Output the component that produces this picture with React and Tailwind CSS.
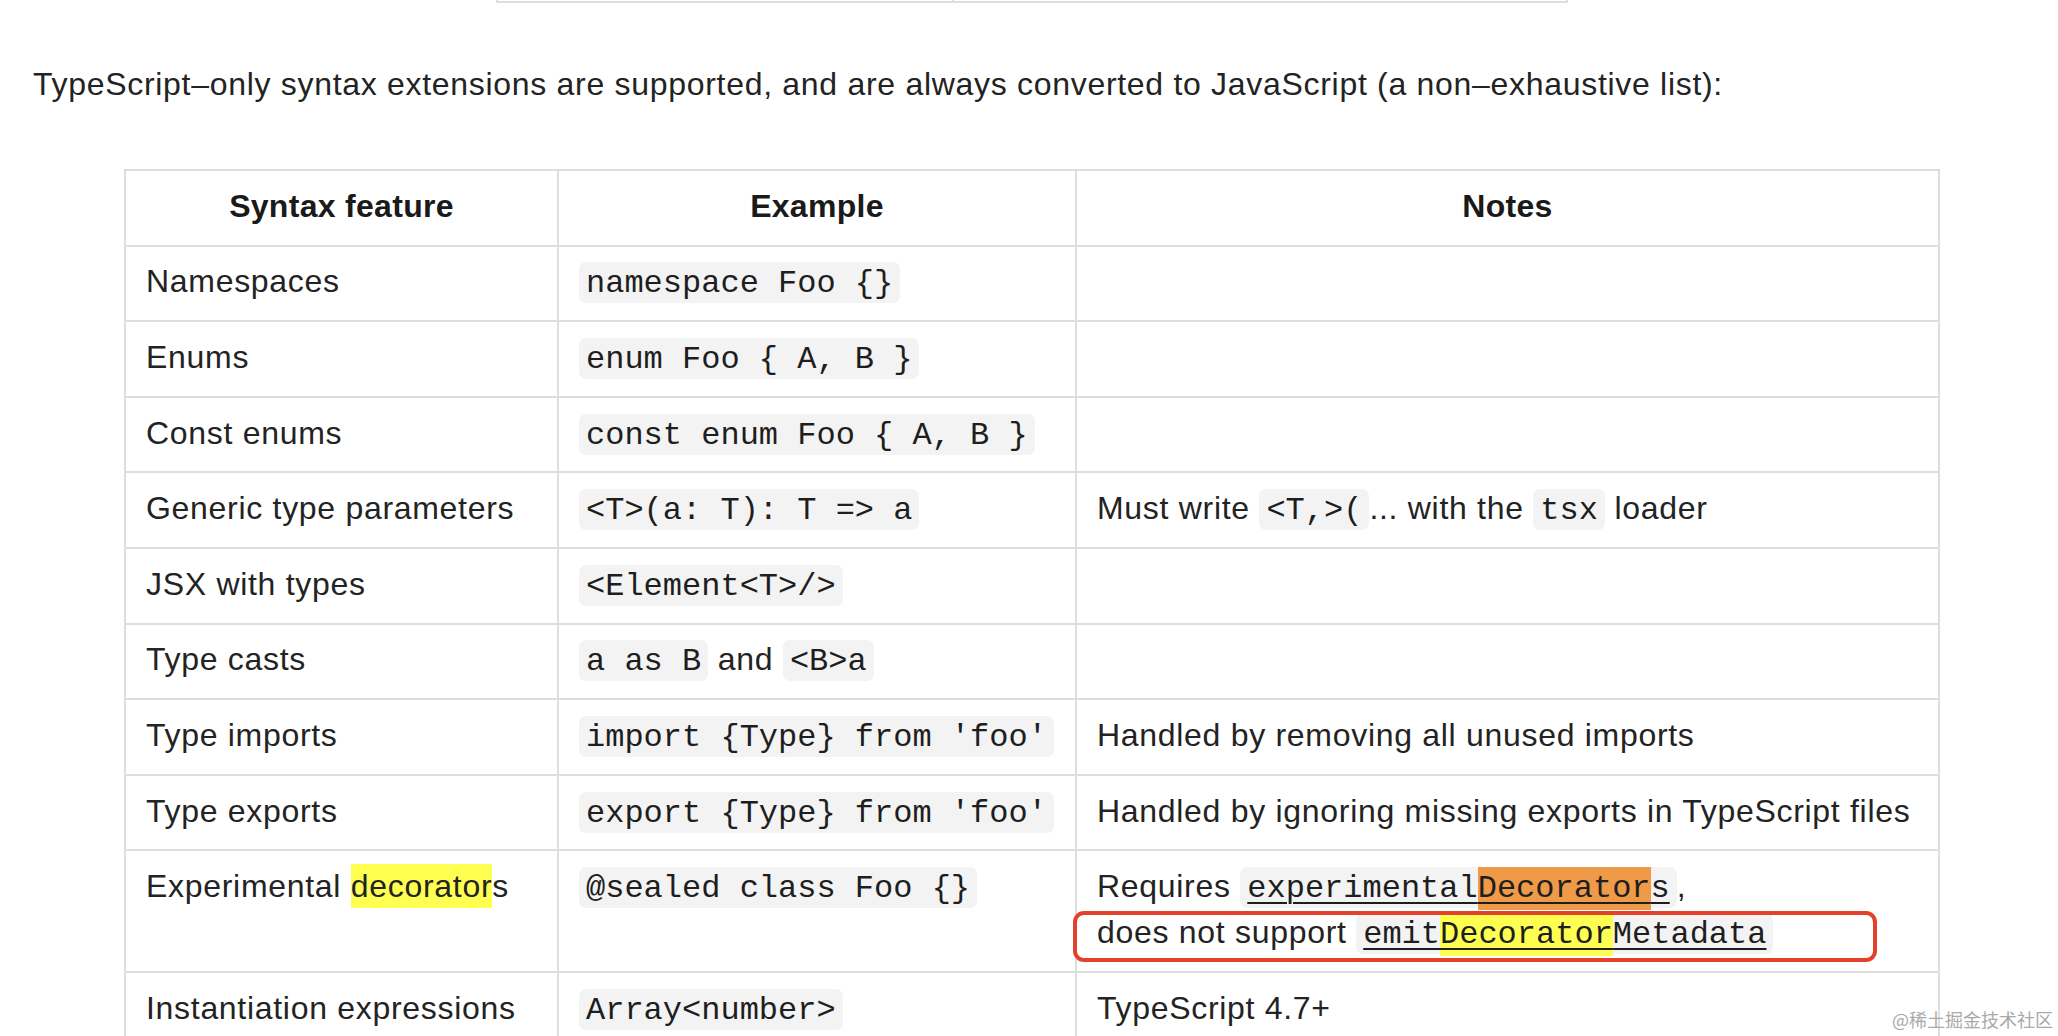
import React from "react";

function Code({ children, link }) {
  return (
    <code
      className={
        "inline-block h-[41px] leading-[44px] px-[7px] rounded-[7px] bg-[#f3f3f3] text-[#1e1e1e] font-['Liberation_Mono','Courier_New',monospace] text-[32px] tracking-normal align-baseline " +
        (link ? "underline decoration-2 underline-offset-[5px] decoration-[#1e1e1e]" : "")
      }
    >
      {children}
    </code>
  );
}

const rows = [
  { feature: "Namespaces", example: <Code>namespace Foo {"{}"}</Code> },
  { feature: "Enums", example: <Code>enum Foo {"{ A, B }"}</Code> },
  { feature: "Const enums", example: <Code>const enum Foo {"{ A, B }"}</Code> },
  {
    feature: "Generic type parameters",
    example: <Code>{"<T>(a: T): T => a"}</Code>,
    notes: (
      <>
        Must write <Code>{"<T,>("}</Code>... with the <Code>tsx</Code> loader
      </>
    ),
  },
  { feature: "JSX with types", example: <Code>{"<Element<T>/>"}</Code> },
  {
    feature: "Type casts",
    example: (
      <>
        <Code>a as B</Code> and <Code>{"<B>a"}</Code>
      </>
    ),
  },
  {
    feature: "Type imports",
    example: <Code>import {"{Type}"} from 'foo'</Code>,
    notes: "Handled by removing all unused imports",
  },
  {
    feature: "Type exports",
    example: <Code>export {"{Type}"} from 'foo'</Code>,
    notes: "Handled by ignoring missing exports in TypeScript files",
  },
  {
    feature: (
      <>
        Experimental <span className="bg-[#ffff52] py-[4px]">decorator</span>s
      </>
    ),
    example: <Code>@sealed class Foo {"{}"}</Code>,
    notes: (
      <>
        Requires{" "}
        <Code link>
          experimental<span className="bg-[#ef9a48] py-[3px]">Decorator</span>s
        </Code>
        ,
        <br />
        does not support{" "}
        <Code link>
          emit<span className="bg-[#ffff52] py-[3px]">Decorator</span>Metadata
        </Code>
      </>
    ),
    marked: true,
  },
  {
    feature: "Instantiation expressions",
    example: <Code>{"Array<number>"}</Code>,
    notes: "TypeScript 4.7+",
  },
];

const cell = "border-2 border-[#dedede] px-[20px] pt-[11.8px] pb-[15.8px] leading-[46px] align-top";

export default function App() {
  return (
    <div className="relative h-[1036px] overflow-hidden bg-white text-[#232323] font-['Liberation_Sans',Arial,sans-serif] text-[32px] tracking-[0.7px]">
      {/* tail of the previous table */}
      <div className="ml-[496px] flex h-[3px] w-[1072px] border-b-2 border-[#dedede]">
        <div className="w-[456px] border-l-2 border-[#dedede]" />
        <div className="flex-1 border-x-2 border-[#dedede]" />
      </div>

      <p className="ml-[33px] mt-[58px] leading-[46px]">
        TypeScript–only syntax extensions are supported, and are always converted to JavaScript (a non–exhaustive list):
      </p>

      <table className="ml-[124px] mt-[62px] w-[1816px] table-fixed border-collapse">
        <colgroup>
          <col className="w-[433px]" />
          <col className="w-[518px]" />
          <col />
        </colgroup>
        <thead>
          <tr>
            <th className={cell + " text-center font-bold tracking-[0.3px] text-[#1a1a1a]"}>Syntax feature</th>
            <th className={cell + " text-center font-bold tracking-[0.3px] text-[#1a1a1a]"}>Example</th>
            <th className={cell + " text-center font-bold tracking-[0.3px] text-[#1a1a1a]"}>Notes</th>
          </tr>
        </thead>
        <tbody>
          {rows.map((r, i) => (
            <tr key={i}>
              <td className={cell}>{r.feature}</td>
              <td className={cell}>{r.example}</td>
              <td className={cell + " relative"}>
                {r.notes}
                {r.marked && (
                  <div className="absolute left-[-4px] top-[60px] h-[51px] w-[804px] rounded-[11px] border-4 border-[#e4412b]" />
                )}
              </td>
            </tr>
          ))}
        </tbody>
      </table>

      <div className="absolute left-[1892px] top-[1006px] text-[18px] leading-[26px] tracking-normal text-[#a9a9a9] font-['Noto_Sans_CJK_SC',sans-serif]">
        @稀土掘金技术社区
      </div>
    </div>
  );
}
